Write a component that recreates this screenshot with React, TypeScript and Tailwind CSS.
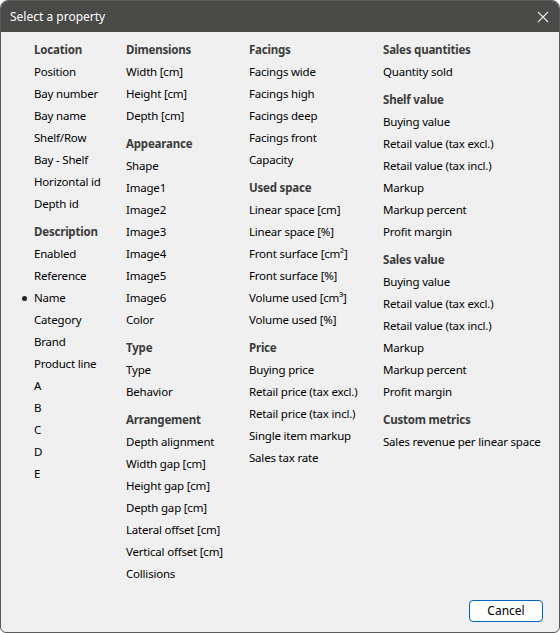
import React from "react";

type Section = { title: string; items: string[] };

const columns: Section[][] = [
  [
    { title: "Location", items: ["Position", "Bay number", "Bay name", "Shelf/Row", "Bay - Shelf", "Horizontal id", "Depth id"] },
    { title: "Description", items: ["Enabled", "Reference", "Name", "Category", "Brand", "Product line", "A", "B", "C", "D", "E"] },
  ],
  [
    { title: "Dimensions", items: ["Width [cm]", "Height [cm]", "Depth [cm]"] },
    { title: "Appearance", items: ["Shape", "Image1", "Image2", "Image3", "Image4", "Image5", "Image6", "Color"] },
    { title: "Type", items: ["Type", "Behavior"] },
    {
      title: "Arrangement",
      items: ["Depth alignment", "Width gap [cm]", "Height gap [cm]", "Depth gap [cm]", "Lateral offset [cm]", "Vertical offset [cm]", "Collisions"],
    },
  ],
  [
    { title: "Facings", items: ["Facings wide", "Facings high", "Facings deep", "Facings front", "Capacity"] },
    {
      title: "Used space",
      items: ["Linear space [cm]", "Linear space [%]", "Front surface [cm²]", "Front surface [%]", "Volume used [cm³]", "Volume used [%]"],
    },
    { title: "Price", items: ["Buying price", "Retail price (tax excl.)", "Retail price (tax incl.)", "Single item markup", "Sales tax rate"] },
  ],
  [
    { title: "Sales quantities", items: ["Quantity sold"] },
    {
      title: "Shelf value",
      items: ["Buying value", "Retail value (tax excl.)", "Retail value (tax incl.)", "Markup", "Markup percent", "Profit margin"],
    },
    {
      title: "Sales value",
      items: ["Buying value", "Retail value (tax excl.)", "Retail value (tax incl.)", "Markup", "Markup percent", "Profit margin"],
    },
    { title: "Custom metrics", items: ["Sales revenue per linear space"] },
  ],
];

const selected = "Name";

export default function App() {
  return (
    <div className="h-[633px] w-[560px] bg-white font-['Noto_Sans',sans-serif] text-[12px]">
      <div className="flex h-full flex-col overflow-hidden rounded-t-[8px] rounded-b-[6px] border border-[#5a5a5a] bg-[#f0f0f0]">
        <div className="flex h-[31px] shrink-0 items-center justify-between bg-[#4a4a48] pl-[9px] pr-[8px] text-white">
          <span className="text-[12px]">Select a property</span>
          <svg width="12" height="12" viewBox="0 0 12 12" className="mr-[2px]">
            <path d="M1 1 L11 11 M11 1 L1 11" stroke="#e8e8e8" strokeWidth="1.1" />
          </svg>
        </div>

        <div className="grid flex-1 grid-cols-[92px_123px_134px_1fr] pl-[33px] pt-[7px] text-[11.5px] tracking-[-0.2px]">
          {columns.map((col, ci) => (
            <div key={ci} className="flex flex-col">
              {col.map((sec, si) => (
                <div key={sec.title} className={si > 0 ? "mt-[6px]" : ""}>
                  <div className="flex h-[22px] items-center font-bold text-[#3c3c3c]">{sec.title}</div>
                  {sec.items.map((it) => (
                    <div key={it} className="relative flex h-[22px] items-center text-black">
                      {ci === 0 && it === selected && (
                        <span className="absolute left-[-12px] top-[9px] h-[5px] w-[5px] rounded-full bg-[#222]" />
                      )}
                      {it}
                    </div>
                  ))}
                </div>
              ))}
            </div>
          ))}
        </div>

        <div className="flex justify-end pb-[10px] pr-[16px]">
          <button className="h-[22px] w-[74px] rounded-[4px] border border-[#0067c0] bg-[#fdfdfd] text-[12px] text-black">
            Cancel
          </button>
        </div>
      </div>
    </div>
  );
}
